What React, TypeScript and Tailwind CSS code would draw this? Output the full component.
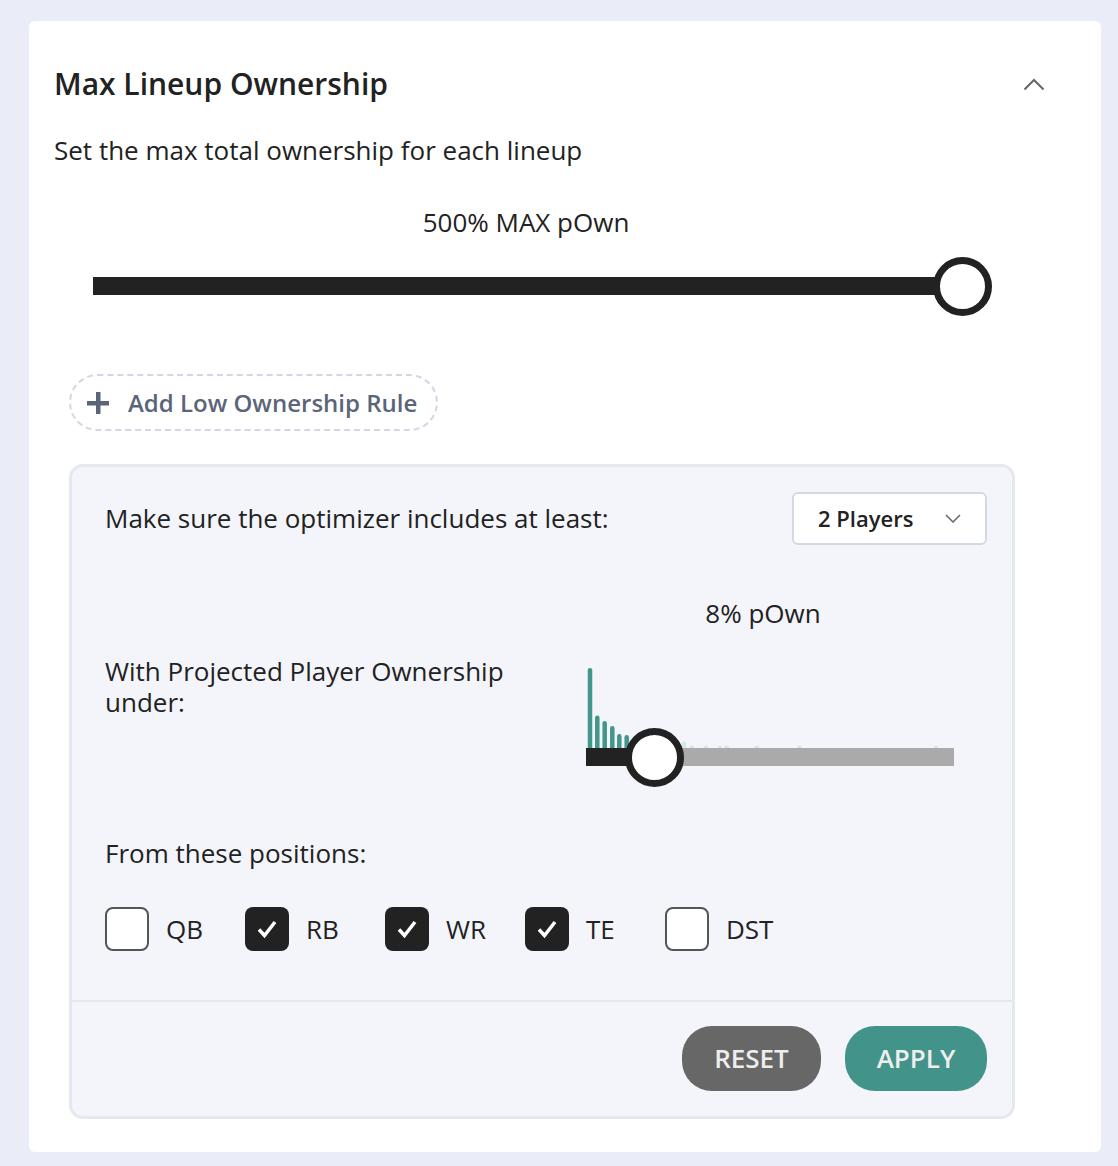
const bars = [
  { x: 590, top: 669, on: true },
  { x: 597.3, top: 716.5, on: true },
  { x: 604.7, top: 722, on: true },
  { x: 612.3, top: 727, on: true },
  { x: 619.3, top: 735, on: true },
  { x: 626.7, top: 736, on: true },
  { x: 684, top: 742.5, on: false },
  { x: 691.7, top: 746.5, on: false },
  { x: 706, top: 746.5, on: false },
  { x: 720, top: 746.5, on: false },
  { x: 726.7, top: 746.5, on: false },
  { x: 756.7, top: 746.5, on: false },
  { x: 799.3, top: 746.5, on: false },
  { x: 936, top: 746.5, on: false },
];

const positions = [
  { label: "QB", checked: false },
  { label: "RB", checked: true },
  { label: "WR", checked: true },
  { label: "TE", checked: true },
  { label: "DST", checked: false },
];

function Thumb({ className }: { className: string }) {
  return (
    <div
      className={`absolute w-[59px] h-[59px] rounded-full bg-white border-[7px] border-[#222222] ${className}`}
    />
  );
}

function Histogram() {
  // chart origin: x 586, y 665, bottom at 749
  return (
    <svg width="368" height="84" viewBox="0 0 368 84" className="block">
      {bars.map((b, i) => {
        const h = 749 - b.top;
        return (
          <rect
            key={i}
            x={b.x - 586 - 2.25}
            y={b.top - 665}
            width={4.5}
            height={h + 3}
            rx={2.25}
            fill={b.on ? "#44968a" : "#d3e7e5"}
          />
        );
      })}
    </svg>
  );
}

export default function App() {
  return (
    <div
      className="min-h-screen bg-[#eaecf7] pt-[21px] pl-[29px] pb-[15px]"
      style={{ fontFamily: "'Open Sans', 'Liberation Sans', sans-serif" }}
    >
      <div className="w-[1072px] bg-white rounded-[6px] px-[25px] pb-[33px] text-[#222222]">
        {/* Header */}
        <div className="flex items-center justify-between pt-[44px] pr-[31px]">
          <h1 className="text-[30px] leading-[38px] font-semibold">Max Lineup Ownership</h1>
          <svg width="22" height="13" viewBox="0 0 22 13" fill="none">
            <polyline points="1.5,11.5 11,2 20.5,11.5" stroke="#666666" strokeWidth="2" />
          </svg>
        </div>
        <p className="mt-[31px] text-[26px] leading-[33px]">Set the max total ownership for each lineup</p>

        {/* Max slider */}
        <div className="ml-[39px] w-[870px]">
          <p className="mt-[39px] text-center text-[26px] leading-[33px] pr-[4px]">500% MAX pOwn</p>
          <div className="relative mt-[38px] h-[18px] bg-[#222222]">
            <Thumb className="left-[840px] top-[-20px]" />
          </div>
        </div>

        {/* Add rule button */}
        <button className="mt-[79px] ml-[15px] flex items-center h-[57px] w-[369px] rounded-full border-2 border-dashed border-[#d3d7e3] pl-[16px] text-[24px] font-semibold text-[#5b6579]">
          <svg width="22" height="22" viewBox="0 0 22 22">
            <rect x="9" y="0" width="4.5" height="22" fill="#5b6579" />
            <rect x="0" y="9" width="22" height="4.5" fill="#5b6579" />
          </svg>
          <span className="ml-[19px]">Add Low Ownership Rule</span>
        </button>

        {/* Rule panel */}
        <div className="mt-[33px] ml-[15px] w-[946px] rounded-[14px] border-[3px] border-[#e6e8f0] bg-[#f4f5fa]">
          <div className="pl-[33px] pr-[25px] pt-[25px]">
            <div className="flex items-center justify-between">
              <span className="text-[26px] leading-[33px]">Make sure the optimizer includes at least:</span>
              <div className="flex items-center justify-between h-[53px] w-[195px] rounded-[6px] border-2 border-[#d3d8e6] bg-white pl-[24px] pr-[24px]">
                <span className="text-[22px] font-semibold">2 Players</span>
                <svg width="16" height="9" viewBox="0 0 16 9" fill="none">
                  <polyline points="1,1 8,8 15,1" stroke="#666666" strokeWidth="1.5" />
                </svg>
              </div>
            </div>

            <div className="mt-[52px] flex items-start">
              <p className="w-[481px] pr-[40px] mt-[59px] text-[26px] leading-[31px]">
                With Projected Player Ownership under:
              </p>
              <div className="w-[368px]">
                <p className="text-center text-[26px] leading-[33px] pr-[14px]">8% pOwn</p>
                <div className="mt-[34px]">
                  <Histogram />
                  <div className="relative h-[18px] bg-[#aaaaaa]">
                    <div className="h-full w-[68px] bg-[#222222]" />
                    <Thumb className="left-[39px] top-[-20px]" />
                  </div>
                </div>
              </div>
            </div>

            <p className="mt-[71px] text-[26px] leading-[33px]">From these positions:</p>

            <div className="mt-[37px] pb-[49px] flex">
              {positions.map((p) => (
                <label key={p.label} className="w-[140px] flex items-center">
                  {p.checked ? (
                    <span className="w-[44px] h-[44px] rounded-[8px] bg-[#222222] flex items-center justify-center">
                      <svg width="22" height="20" viewBox="0 0 22 20" fill="none">
                        <polyline points="3,10.5 8.5,16.5 19,3" stroke="white" strokeWidth="3.5" />
                      </svg>
                    </span>
                  ) : (
                    <span className="w-[44px] h-[44px] rounded-[8px] bg-white border-2 border-[#555555]" />
                  )}
                  <span className="ml-[17px] text-[26px] leading-[33px]">{p.label}</span>
                </label>
              ))}
            </div>
          </div>

          <div className="border-t-2 border-[#e6e8f0] flex justify-end gap-[24px] pt-[24px] pb-[25px] pr-[25px]">
            <button className="h-[65px] w-[139px] rounded-[30px] bg-[#676767] text-[26px] font-semibold text-[#eeeeee]">
              RESET
            </button>
            <button className="h-[65px] w-[142px] rounded-[30px] bg-[#42948a] text-[26px] font-semibold text-[#eeeeee]">
              APPLY
            </button>
          </div>
        </div>
      </div>
    </div>
  );
}
